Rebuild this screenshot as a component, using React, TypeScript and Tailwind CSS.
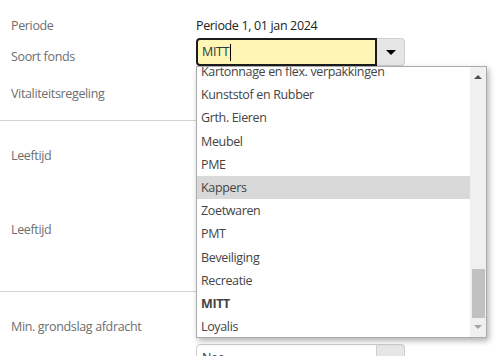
import React from 'react';

const fondsen = [
  'Kartonnage en flex. verpakkingen',
  'Kunststof en Rubber',
  'Grth. Eieren',
  'Meubel',
  'PME',
  'Kappers',
  'Zoetwaren',
  'PMT',
  'Beveiliging',
  'Recreatie',
  'MITT',
  'Loyalis',
];

function Label({ children }: { children: React.ReactNode }) {
  return <div className="w-[185px] shrink-0 pl-[11px] pt-[3px] leading-[20px] text-[#6e6e6e]">{children}</div>;
}

function FondsList() {
  return (
    <div className="absolute left-0 top-[28px] z-10 flex h-[272px] w-[291px] border border-[#ababab] bg-white shadow-[2px_3px_6px_rgba(0,0,0,0.3)]">
      <div className="flex-1 overflow-hidden">
        <div className="-mt-[7px]">
          {fondsen.map(f => (
            <div key={f}
              className={`h-[23.2px] whitespace-nowrap pl-[4px] leading-[23px] text-[#444] ${f === 'Kappers' ? 'bg-[#d9d9d9]' : ''} ${f === 'MITT' ? 'font-bold' : ''}`}>
              {f}
            </div>
          ))}
        </div>
      </div>
      {/* scrollbar */}
      <div className="flex w-[16px] flex-col items-center bg-[#f0f0f0]">
        <div className="mt-[8px] h-0 w-0 border-x-[4px] border-b-[4px] border-x-transparent border-b-[#505050]" />
        <div className="flex-1" />
        <div className="h-[49px] w-[13px] bg-[#c1c1c1]" />
        <div className="mb-[8px] mt-[7px] h-0 w-0 border-x-[4px] border-t-[4px] border-x-transparent border-t-[#a3a3a3]" />
      </div>
    </div>
  );
}

export default function App() {
  return (
    <div className="relative h-[356px] w-[501px] overflow-hidden bg-white pt-[16px] font-['Open_Sans',sans-serif] text-[12.5px] tracking-[-0.35px]">
      <div className="w-[480px]">
        <div className="flex h-[20px]">
          <div className="w-[185px] shrink-0 pl-[11px] leading-[20px] text-[#6e6e6e]">Periode</div>
          <div className="pl-[11px] leading-[20px] text-[#222]">Periode 1, 01 jan 2024</div>
        </div>

        <div className="mt-[2px] flex h-[28px]">
          <div className="pt-[6px]"><Label>Soort fonds</Label></div>
          <div className="relative ml-[11px] flex">
            <div className="flex h-[28px] w-[181px] items-center rounded-l-[4px] border-2 border-[#1c1c1c] bg-[#fff5b5] pl-[4px] leading-[20px] text-[#2a3a3a]">
              MITT<span className="ml-[1px] h-[17px] w-px bg-black" />
            </div>
            <div className="flex h-[28px] w-[28px] items-center justify-center rounded-r-[4px] border border-l-0 border-[#cfcfcf] bg-[#e6e6e6]">
              <div className="h-0 w-0 border-x-[5px] border-t-[5px] border-x-transparent border-t-black" />
            </div>
            <FondsList />
          </div>
        </div>

        <div className="mt-[12px] flex h-[28px] items-center">
          <Label>Vitaliteitsregeling</Label>
        </div>

        <div className="mt-[14px] h-px bg-[#d4d4d4]" />

        <div className="mt-[19px] flex h-[28px] items-center">
          <Label>Leeftijd</Label>
        </div>

        <div className="mt-[46px] flex h-[28px] items-center">
          <Label>Leeftijd</Label>
        </div>

        <div className="mt-[49px] h-px bg-[#d4d4d4]" />

        <div className="mt-[19px] flex h-[28px] items-center">
          <Label>Min. grondslag afdracht</Label>
        </div>

        <div className="mt-[5px] flex h-[28px]">
          <div className="w-[185px] shrink-0" />
          <div className="ml-[11px] flex">
            <div className="flex h-[28px] w-[181px] items-center rounded-l-[4px] border border-[#cfcfcf] bg-white pl-[5px] text-[#333]">Nee</div>
            <div className="flex h-[28px] w-[28px] items-center justify-center rounded-r-[4px] border border-l-0 border-[#cfcfcf] bg-[#e6e6e6]">
              <div className="h-0 w-0 border-x-[5px] border-t-[5px] border-x-transparent border-t-black" />
            </div>
          </div>
        </div>
      </div>
    </div>
  );
}
